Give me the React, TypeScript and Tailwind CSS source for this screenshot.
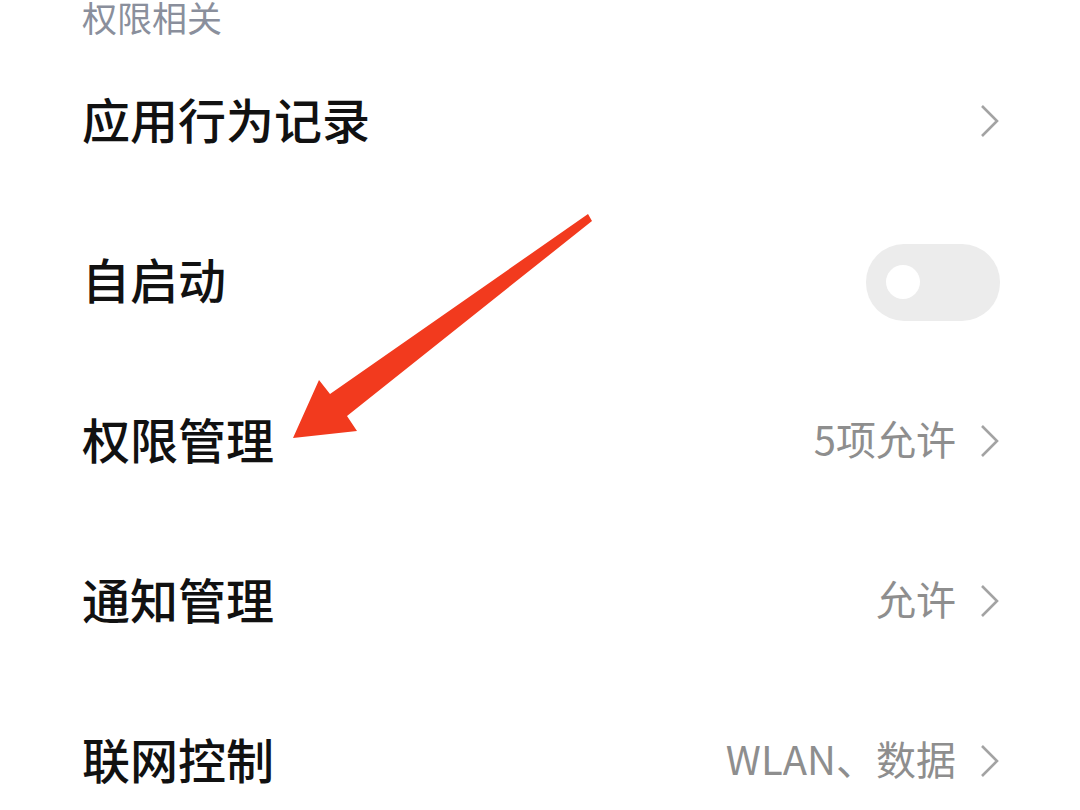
import React from "react";

const FONT = { fontFamily: '"Noto Sans CJK SC", "Noto Sans", sans-serif' };

function Chevron() {
  return (
    <svg width="22" height="36" viewBox="0 0 22 36" className="shrink-0 mt-[6px]">
      <path d="M4 3 L19 18 L4 33" fill="none" stroke="#a3a3a3" strokeWidth="2.6" strokeLinejoin="miter" />
    </svg>
  );
}

function Toggle() {
  return (
    <div className="w-[134px] h-[77px] mt-[8px] rounded-[38px] bg-[#ececec] flex items-center pl-[20px]">
      <div className="w-[34px] h-[34px] rounded-full bg-white" />
    </div>
  );
}

type Row = { title: string; value?: string; toggle?: boolean };

const ROWS: Row[] = [
  { title: "应用行为记录" },
  { title: "自启动", toggle: true },
  { title: "权限管理", value: "5项允许" },
  { title: "通知管理", value: "允许" },
  { title: "联网控制", value: "WLAN、数据" },
];

export default function App() {
  return (
    <div className="relative w-[1080px] h-[810px] bg-white overflow-hidden" style={FONT}>
      <div className="h-[38px] pl-[82px] pr-[80px]">
        <div className="text-[35px] leading-[34px] text-[#8a8f9c]">权限相关</div>
      </div>
      {ROWS.map((r) => (
        <div key={r.title} className="h-[160px] flex items-center justify-between pl-[82px] pr-[80px]">
          <span className="text-[48px] font-medium text-[#111111] leading-none">{r.title}</span>
          {r.toggle ? (
            <Toggle />
          ) : (
            <div className="flex items-center gap-[22px]">
              {r.value && <span className="text-[40px] text-[#8e8e8e] leading-none">{r.value}</span>}
              <Chevron />
            </div>
          )}
        </div>
      ))}
      <svg className="absolute left-0 top-0" width="1080" height="810" viewBox="0 0 1080 810">
        <polygon
          points="588,214 592,221 347,416 357,431 293,438 319,380 330,394"
          fill="#f23a1e"
        />
      </svg>
    </div>
  );
}
